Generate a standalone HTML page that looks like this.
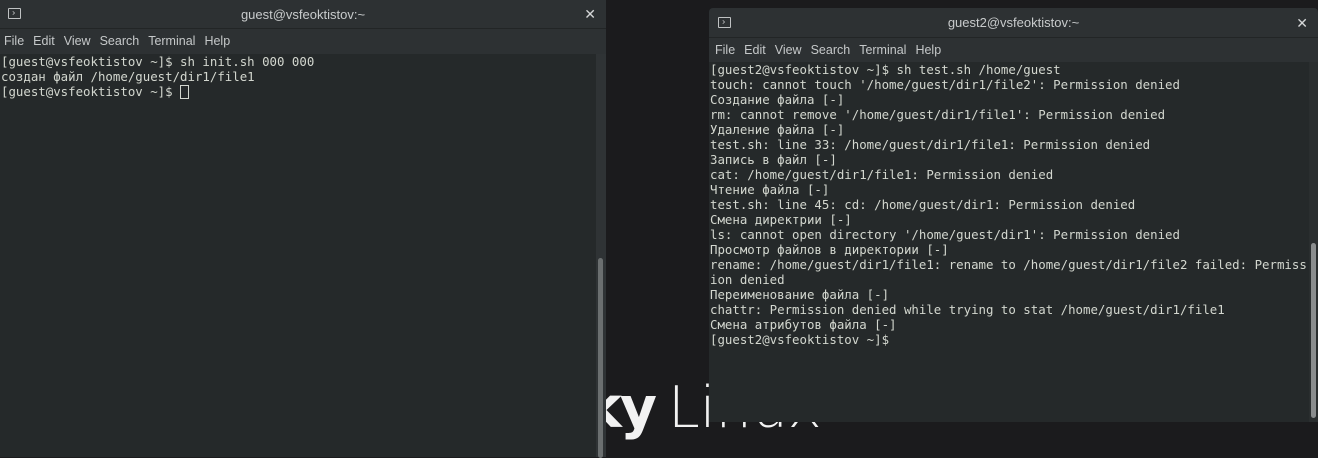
<!DOCTYPE html>
<html><head><meta charset="utf-8"><style>
*{margin:0;padding:0;box-sizing:border-box}
body{width:1318px;height:457px;background:#1b1b1d;position:relative;overflow:hidden;font-family:"Liberation Sans","DejaVu Sans",sans-serif}
.lg{position:absolute;top:378px;font-size:57px;color:#f2f2f2;font-family:"DejaVu Sans",sans-serif;white-space:nowrap;line-height:60px}
.ky{right:663px;font-weight:bold;letter-spacing:-2px}
.lx{left:668px;font-weight:200}
.win{position:absolute;background:#2d3133}
.title{height:30px;position:relative;color:#c8cbcc;font-size:13px;text-align:center;line-height:30px;border-bottom:1px solid #222526}
.ico{position:absolute;left:9px;top:9px;width:13px;height:11px;border:1px solid #bfc2c3;border-radius:1px}
.ico:after{content:"";position:absolute;left:2px;top:2px;width:3px;height:3px;border-right:1px solid #bfc2c3;border-bottom:1px solid #bfc2c3;transform:rotate(-45deg) scale(.7)}
.x{position:absolute;right:10px;top:0;font-size:14px;color:#d5d7d8}
.menu{height:24px;color:#c5c8c9;font-size:12.5px;line-height:24px;padding-left:6px}
.menu i{font-style:normal;margin-right:9px}
.term{position:absolute;background:#25292a;color:#d3d7cf;font-family:"DejaVu Sans Mono","Liberation Mono",monospace;font-size:12.4px;line-height:15px;white-space:pre;overflow:hidden}
.sb{position:absolute;background:#2f3335}
.thumb{position:absolute;background:#6b6f70;border-radius:3px}
.cur{display:inline-block;width:9px;height:14px;border:1px solid #d3d7cf;vertical-align:-3px}
</style></head><body>
<div class="lg ky">Rocky</div>
<div class="lg lx">Linux</div>

<div class="win" style="left:0;top:0;width:606px;height:457px">
 <div class="title" style="height:29px;line-height:29px"><div class="ico" style="left:8px;top:8px"></div>guest@vsfeoktistov:~<span class="x">✕</span></div>
 <div class="menu" style="padding-left:4px"><i>File</i><i>Edit</i><i>View</i><i>Search</i><i>Terminal</i><i>Help</i></div>
 <div class="term" style="left:0;top:54px;width:596px;height:403px;padding-left:1px;line-height:15px;padding-top:0">[guest@vsfeoktistov ~]$ sh init.sh 000 000
создан файл /home/guest/dir1/file1
[guest@vsfeoktistov ~]$ <span class="cur"></span></div>
 <div class="sb" style="left:596px;top:54px;width:10px;height:403px"><div class="thumb" style="left:2px;top:204px;width:5px;height:200px"></div></div>
</div>

<div class="win" style="left:709px;top:8px;width:609px;height:414px;border-radius:4px 4px 0 0">
 <div class="title"><div class="ico"></div>guest2@vsfeoktistov:~<span class="x">✕</span></div>
 <div class="menu"><i>File</i><i>Edit</i><i>View</i><i>Search</i><i>Terminal</i><i>Help</i></div>
 <div class="term" style="left:0;top:54px;width:600px;height:360px;padding-left:1px">[guest2@vsfeoktistov ~]$ sh test.sh /home/guest
touch: cannot touch '/home/guest/dir1/file2': Permission denied
Создание файла [-]
rm: cannot remove '/home/guest/dir1/file1': Permission denied
Удаление файла [-]
test.sh: line 33: /home/guest/dir1/file1: Permission denied
Запись в файл [-]
cat: /home/guest/dir1/file1: Permission denied
Чтение файла [-]
test.sh: line 45: cd: /home/guest/dir1: Permission denied
Смена директрии [-]
ls: cannot open directory '/home/guest/dir1': Permission denied
Просмотр файлов в директории [-]
rename: /home/guest/dir1/file1: rename to /home/guest/dir1/file2 failed: Permiss
ion denied
Переименование файла [-]
chattr: Permission denied while trying to stat /home/guest/dir1/file1
Смена атрибутов файла [-]
[guest2@vsfeoktistov ~]$</div>
 <div class="sb" style="left:600px;top:54px;width:9px;height:360px;background:#2a2e2f"><div class="thumb" style="left:2px;top:181px;width:5px;height:175px;background:#8a8d8e"></div></div>
</div>
</body></html>
